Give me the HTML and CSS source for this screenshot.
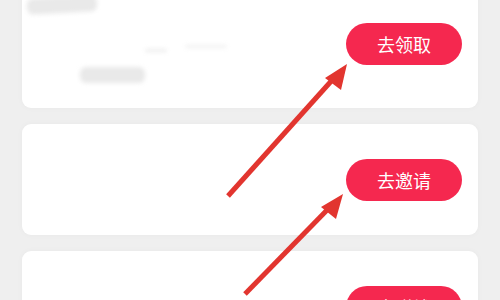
FILE: index.html
```html
<!DOCTYPE html>
<html lang="zh-CN">
<head>
  <meta charset="UTF-8">
  <meta name="viewport" content="width=device-width, initial-scale=1.0">
  <title>任务列表</title>
  <link rel="stylesheet" href="styles.css">
</head>
<body>
  <div class="list">
    <div class="card card-first">
      <div class="info">
        <span class="blur blur-title"></span>
        <span class="blur blur-line1"></span>
        <span class="blur blur-line2"></span>
        <span class="blur blur-sub"></span>
      </div>
      <button class="btn">去领取</button>
    </div>
    <div class="card">
      <div class="info"></div>
      <button class="btn">去邀请</button>
    </div>
    <div class="card">
      <div class="info"></div>
      <button class="btn">去赚钱</button>
    </div>
  </div>

  <!-- annotation arrows -->
  <svg class="arrows" width="500" height="300" viewBox="0 0 500 300">
    <line x1="228" y1="196" x2="334" y2="78" stroke="#e2352f" stroke-width="5" />
    <polygon points="347,64 325,78 341,90" fill="#e2352f" />
    <line x1="245" y1="294" x2="331" y2="206" stroke="#e2352f" stroke-width="5" />
    <polygon points="343,194 321,207 336,219" fill="#e2352f" />
  </svg>
</body>
</html>
```
FILE: styles.css
```css
body {
  margin: 0;
  background: #efefef;
  font-family: "Noto Sans CJK SC", "Noto Sans", sans-serif;
  overflow: hidden;
}
.list {
  display: flex;
  flex-direction: column;
  gap: 16px;
  padding: 0 22px;
  margin-top: -12px;
}
.card {
  height: 111px;
  box-sizing: border-box;
  background: #fff;
  border-radius: 9px;
  box-shadow: 0 0 6px rgba(0, 0, 0, 0.03);
  display: flex;
  align-items: flex-start;
  justify-content: space-between;
  padding: 35px 16px 0 0;
}
.card-first {
  height: 120px;
}
.info {
  position: relative;
  flex: 1;
  align-self: stretch;
}
.blur {
  position: absolute;
  background: #e9e9e9;
  border-radius: 6px;
  filter: blur(2px);
}
.blur-title {
  left: 5px;
  top: -26px;
  width: 70px;
  height: 16px;
  transform: rotate(-3deg);
}
.blur-line1 {
  left: 123px;
  top: 26px;
  width: 22px;
  height: 3px;
  background: #ececec;
}
.blur-line2 {
  left: 163px;
  top: 22px;
  width: 42px;
  height: 3px;
  background: #f1f1f1;
}
.blur-sub {
  left: 58px;
  top: 44px;
  width: 65px;
  height: 16px;
}
.btn {
  width: 116px;
  height: 42px;
  border: none;
  border-radius: 21px;
  background: #f5284f;
  color: #fff;
  font-family: inherit;
  font-size: 18px;
  padding: 0;
  flex-shrink: 0;
}
.arrows {
  position: absolute;
  left: 0;
  top: 0;
}
```
